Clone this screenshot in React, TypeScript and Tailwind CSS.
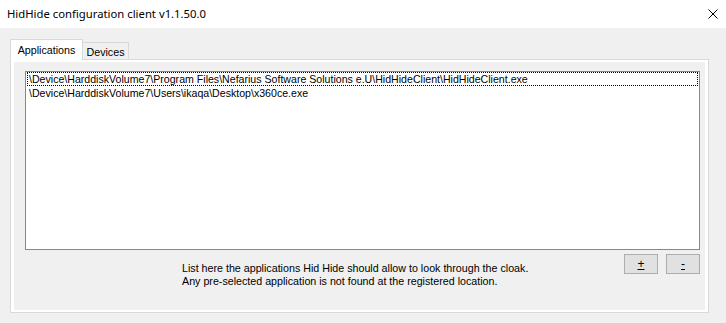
export default function App() {
  return (
    <div className="w-[726px] h-[323px] overflow-hidden bg-[#f0f0f0] text-black font-['Liberation_Sans',Arial,sans-serif]">
      {/* title bar */}
      <div className="h-[28px] bg-white flex items-center pl-[7px] pr-[8px]">
        <span className="text-[11.3px] font-['Noto_Sans',sans-serif] leading-none">HidHide configuration client v1.1.50.0</span>
        <svg className="ml-auto w-[10px] h-[10px]" viewBox="0 0 10 10" fill="none" stroke="#000" strokeWidth={1}>
          <path d="M0.5 0.5L9.5 9.5M9.5 0.5L0.5 9.5" />
        </svg>
      </div>

      <div className="pl-[10px] pt-[11px]">
        {/* tabs */}
        <div className="flex items-end h-[20px]">
          <div className="relative z-10 -mb-px h-[21px] w-[73px] bg-white border border-b-0 border-[#d9d9d9] flex items-center justify-center text-[10.7px]">
            Applications
          </div>
          <div className="h-[17px] w-[46px] bg-[#f0f0f0] border border-l-0 border-b-0 border-[#d9d9d9] flex items-center justify-center pt-[2px] text-[10.7px]">
            Devices
          </div>
        </div>

        {/* tab panel */}
        <div className="w-[699px] h-[254px] border border-[#d9d9d9] bg-white pt-[2px] pl-[3px] pr-[3px] pb-[2px]">
          <div className="h-full bg-[#f0f0f0] pl-[11px] pt-[9px]">
            <div className="w-[675px] h-[179px] border border-[#828790] bg-white text-[10.6px]">
              <div className="h-[14px] mx-px pl-px leading-[12px] border border-dotted border-black whitespace-nowrap">
                \Device\HarddiskVolume7\Program Files\Nefarius Software Solutions e.U\HidHideClient\HidHideClient.exe
              </div>
              <div className="h-[14px] mx-px pl-px leading-[12px] border border-transparent whitespace-nowrap">
                \Device\HarddiskVolume7\Users\ikaqa\Desktop\x360ce.exe
              </div>
            </div>

            <div className="w-[675px] flex items-start">
              <div className="ml-[157px] mt-[12px] text-[10.7px] leading-[13px]">
                <div>List here the applications Hid Hide should allow to look through the cloak.</div>
                <div>Any pre-selected application is not found at the registered location.</div>
              </div>
              <div className="ml-auto mt-[4px] flex gap-[8px]">
                <button className="w-[34px] h-[20px] bg-[#e1e1e1] border border-[#adadad] text-[12px] leading-none flex items-center justify-center">
                  <span className="underline">+</span>
                </button>
                <button className="w-[34px] h-[20px] bg-[#e1e1e1] border border-[#adadad] text-[12px] leading-none flex items-center justify-center">
                  <span className="underline">-</span>
                </button>
              </div>
            </div>
          </div>
        </div>
      </div>
    </div>
  );
}
